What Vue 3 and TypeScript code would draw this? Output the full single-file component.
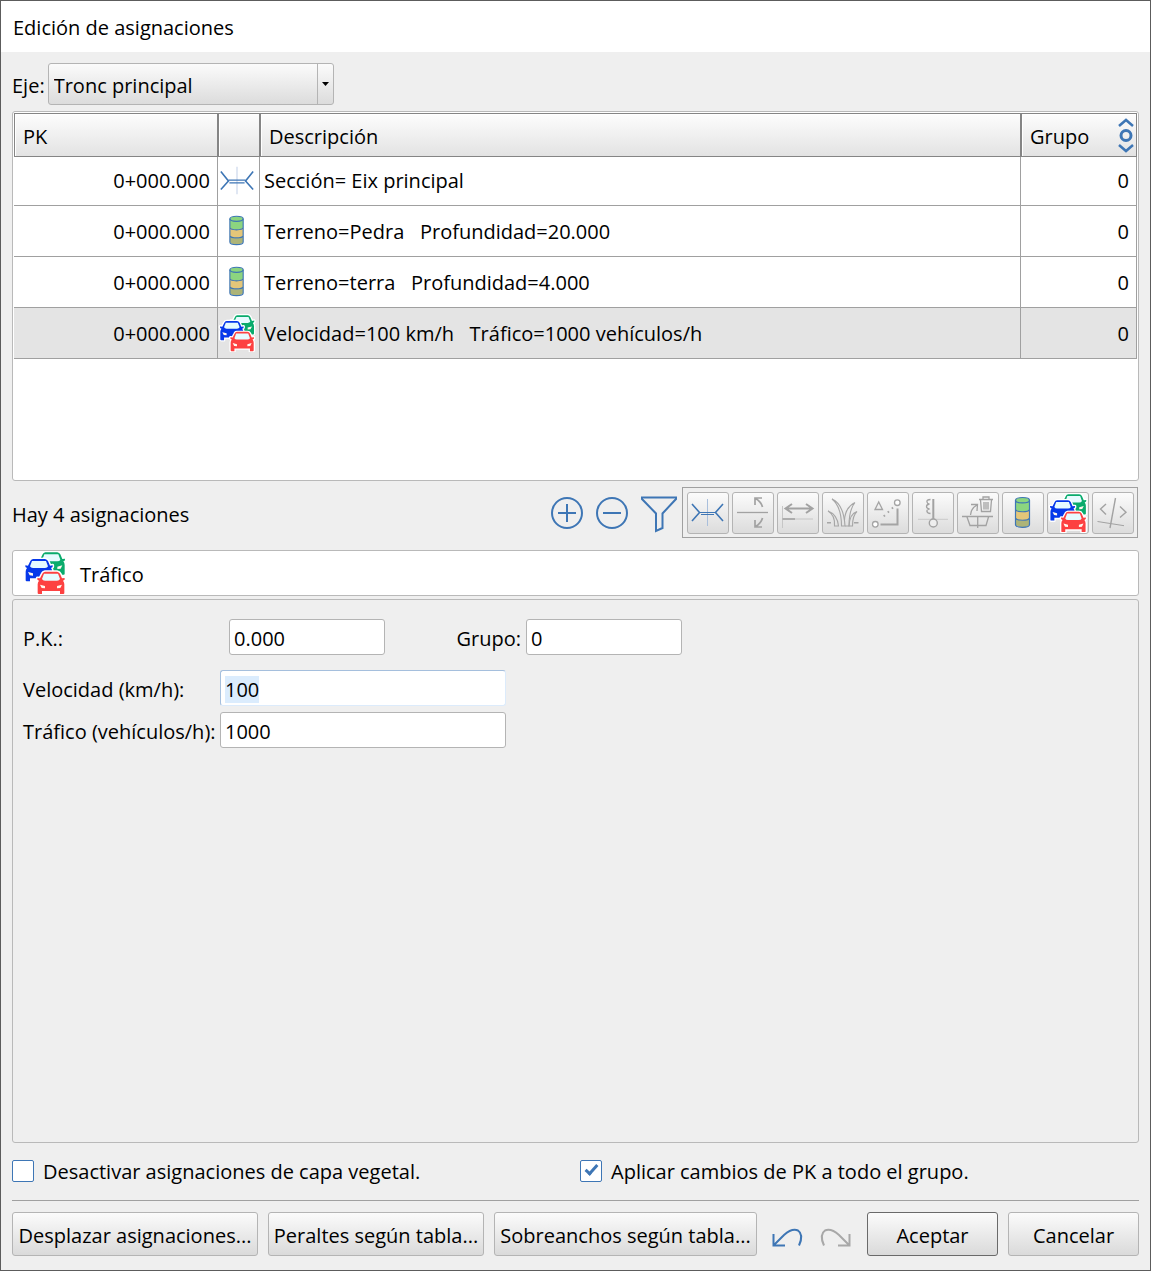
<script setup lang="ts">
import { onMounted, ref } from 'vue'

interface Assignment {
  pk: string
  icon: string
  description: string
  group: number
}

interface Tool {
  icon: string
  label: string
  enabled: boolean
}

const axis = ref('Tronc principal')
const selected = ref(3)

const assignments: Assignment[] = [
  { pk: '0+000.000', icon: 'section-row', description: 'Sección= Eix principal', group: 0 },
  { pk: '0+000.000', icon: 'soil', description: 'Terreno=Pedra   Profundidad=20.000', group: 0 },
  { pk: '0+000.000', icon: 'soil', description: 'Terreno=terra   Profundidad=4.000', group: 0 },
  { pk: '0+000.000', icon: 'cars', description: 'Velocidad=100 km/h   Tráfico=1000 vehículos/h', group: 0 },
]

const tools: Tool[] = [
  { icon: 'section', label: 'Sección', enabled: true },
  { icon: 'slope', label: 'Peralte', enabled: false },
  { icon: 'widening', label: 'Sobreancho', enabled: false },
  { icon: 'grass', label: 'Capa vegetal', enabled: false },
  { icon: 'shapes', label: 'Geometría', enabled: false },
  { icon: 'offset', label: 'Desplazamiento', enabled: false },
  { icon: 'removal', label: 'Eliminación', enabled: false },
  { icon: 'soil', label: 'Terreno', enabled: true },
  { icon: 'cars', label: 'Tráfico', enabled: true },
  { icon: 'code', label: 'Código', enabled: false },
]

const pk = ref('0.000')
const group = ref('0')
const speed = ref('100')
const traffic = ref('1000')
const disableTopsoil = ref(false)
const applyToGroup = ref(true)

const speedInput = ref<HTMLInputElement | null>(null)

onMounted(() => {
  speedInput.value?.focus()
  speedInput.value?.select()
})
</script>

<template>
  <svg class="defs" aria-hidden="true">
    <symbol id="section" viewBox="1 1 40 40">
      <path d="M20.5 7V34" stroke="#a9bfdc" fill="none" />
      <path d="M5 12L12.5 20.5L5 29M36 12L28.5 20.5L36 29" stroke="#3e76b5" stroke-width="1.6" fill="none" />
      <path d="M12.5 20.5H28.5M14 22.5H27" stroke="#3e76b5" stroke-width="1.2" fill="none" />
    </symbol>
    <symbol id="section-row" viewBox="1 1 40 40">
      <path d="M21 6V35" stroke="#dfe6f3" stroke-width="2" fill="none" />
      <path d="M4 11L12 21L4 30M38 11L30 21L38 30" stroke="#3e76b5" stroke-width="1.7" fill="none" />
      <path d="M12 20.2H30M13 23H29" stroke="#3e76b5" stroke-width="1.3" fill="none" />
    </symbol>
    <symbol id="slope" viewBox="1 1 40 40">
      <g stroke="#a2a2a2" fill="none">
        <path d="M5 20.5H36" stroke-width="1.3" />
        <path d="M23 13V6H30M23.5 6.5Q29 9.5 30.5 15M23 28V35H30M23.5 34.5Q29 31.5 30.5 26" stroke-width="1.7" />
      </g>
    </symbol>
    <symbol id="widening" viewBox="1 1 40 40">
      <g stroke="#a2a2a2" fill="none">
        <path d="M9 16.5H35M15 12L8.5 16.5L15 21M29 12L35.5 16.5L29 21" stroke-width="2" />
        <path d="M5.5 14V36M5.5 27H36" stroke="#c6c6c6" />
        <path d="M5.5 27H18" stroke-width="1.6" />
      </g>
    </symbol>
    <symbol id="grass" viewBox="1 1 40 40">
      <g stroke="#a6a6a6" fill="none" stroke-width="1.1">
        <path d="M10 7C17 10 22 18 23 34H19.5C19.5 22 16 12 10 7Z" />
        <path d="M33 10.5C26 14 23 20 22.5 28M33 10.5C28.5 16 27 24 27 34H23" />
        <path d="M6 19C12 21 16 27 16.500 34H12.5C13 28 11 22 6 19ZM35 19.5C30 21 27.5 26 27 34H30.5C30.5 28 31 23 35 19.5Z" />
        <path d="M5 30.7H9M32 30.7H36.5" stroke-width="1.4" />
      </g>
    </symbol>
    <symbol id="shapes" viewBox="1 1 40 40">
      <g stroke="#a4a4a4" fill="none" stroke-width="1.3">
        <path d="M11.7 10L8 17.5H15.500Z" />
        <circle cx="30.3" cy="10.7" r="2.8" fill="#fff" />
        <circle cx="8.3" cy="32.3" r="2.8" fill="#fff" />
        <path d="M30.5 16.5V32.5H13.5" stroke-width="2" />
        <path d="M26 15.5L14 27" stroke-width="2" stroke-dasharray="1.6 4" />
      </g>
    </symbol>
    <symbol id="offset" viewBox="1 1 40 40">
      <g stroke="#a2a2a2" fill="none">
        <path d="M6 27.3H36" stroke="#cacaca" />
        <path d="M21.3 7V27" stroke-width="2" />
        <circle cx="21.3" cy="31" r="4" stroke-width="1.4" fill="#eee" />
        <path d="M18.5 7.5Q14.5 7.5 15 10Q15.3 12 17.5 12Q14.5 12.5 14.5 14.5T17.5 17Q14.5 17.5 15 19.5Q15.5 21.5 18.5 21.5" stroke-width="1.3" />
      </g>
    </symbol>
    <symbol id="removal" viewBox="1 1 40 40">
      <g stroke="#a2a2a2" fill="none" stroke-width="1.3">
        <path d="M22 7.5H36M26 7V5H32V7M23.5 8L24.5 19.5H33.5L34.5 8M27 10V17.5M29 10V17.5M31 10V17.5" />
        <path d="M13.5 23Q14 16 20 13M14 12.5H20.5L20 19" />
        <path d="M5 24.5H36M10 25L13 33.5H29L31.5 25M20.7 25V36" />
      </g>
    </symbol>
    <symbol id="soil" viewBox="1 1 40 40">
      <path d="M13.5 8V18Q20.5 22 27.5 18V8Z" fill="#8cd57f" />
      <path d="M13.5 17.5Q20.5 22 27.5 17.5V27Q20.5 31 13.5 27Z" fill="#e4c679" />
      <path d="M13.5 26.5Q20.5 31 27.5 26.5V33Q20.5 38 13.5 33Z" fill="#adb478" />
      <ellipse cx="20.5" cy="8.2" rx="7" ry="2.7" fill="#8cd57f" />
      <g fill="none" stroke="#3e76b5" stroke-width="1.2">
        <ellipse cx="20.5" cy="8.2" rx="7" ry="2.7" />
        <path d="M13.5 8.2V32.5C13.5 36.2 27.5 36.2 27.5 32.5V8.2M13.5 17.5C14.5 20.5 26.5 20.5 27.5 17.5M13.5 26C14.5 29 26.5 29 27.5 26" />
      </g>
    </symbol>
    <symbol id="car" viewBox="-5 -5 94 78">
      <path
        d="M16 6Q18 1 24 0H60Q66 1 69 6L75 20L83 19Q85 25 78 27Q82 32 82 38V64Q82 67 79 67H69V58H15V67H5Q2 67 2 64V38Q2 32 6 27Q-1 25 1 19L9 20Z"
        fill="currentColor" stroke="#fff" stroke-width="9" stroke-linejoin="round" paint-order="stroke"
      />
      <path d="M21 6H63L69 22Q67 27 60 27H24Q17 27 15 22Z" fill="#e6fbff" />
      <path d="M9 39L24 43V50L14 49ZM75 39L60 43V50L70 49Z" fill="#fff8ee" />
    </symbol>
    <symbol id="cars" viewBox="-6 -4 132 132">
      <use href="#car" x="32" y="-5" width="94" height="78" color="#0aab6c" />
      <use href="#car" x="-5" y="15" width="94" height="78" color="#0638ea" />
      <use href="#car" x="31" y="53" width="94" height="78" color="#fd4141" />
    </symbol>
    <symbol id="code" viewBox="1 1 40 40">
      <g stroke="#a2a2a2" fill="none" stroke-width="1.4">
        <path d="M14 12L8.5 17L14 22.5M28 14.5L34 20.3L28 25.5M23.5 6L18 36" />
        <path d="M5.5 29.5L32 33.7" stroke-width="1" />
      </g>
    </symbol>
  </svg>

  <main class="dialog">
    <header class="title">Edición de asignaciones</header>

    <div class="content">
      <div class="axis">
        <label for="axis">Eje:</label>
        <div class="combo">
          <select id="axis" v-model="axis">
            <option>Tronc principal</option>
          </select>
          <span class="combo-arrow">
            <svg width="7" height="4" viewBox="0 0 7 4"><path d="M0 0H7L3.5 4Z" /></svg>
          </span>
        </div>
      </div>

      <div class="list">
        <table>
          <colgroup>
            <col class="col-pk" />
            <col class="col-icon" />
            <col />
            <col class="col-group" />
          </colgroup>
          <thead>
            <tr>
              <th scope="col">PK</th>
              <th scope="col" aria-label="Tipo"></th>
              <th scope="col">Descripción</th>
              <th scope="col" class="group-cell">
                <div class="group-head">
                  <span>Grupo</span>
                  <svg width="16" height="36" viewBox="0 0 16 36" fill="none" stroke="#3e76b5" stroke-width="2.5">
                    <path d="M1 9L8 3L15 9M1 28L8 34L15 28" />
                    <circle cx="8" cy="18.5" r="5" stroke-width="3" />
                  </svg>
                </div>
              </th>
            </tr>
          </thead>
          <tbody>
            <tr
              v-for="(row, i) in assignments"
              :key="i"
              :class="{ selected: i === selected }"
              @click="selected = i"
            >
              <td class="num">{{ row.pk }}</td>
              <td class="type"><svg><use :href="'#' + row.icon" /></svg></td>
              <td class="desc">{{ row.description }}</td>
              <td class="num">{{ row.group }}</td>
            </tr>
          </tbody>
        </table>
      </div>

      <div class="tools">
        <span class="count">Hay {{ assignments.length }} asignaciones</span>
        <div class="actions">
          <button type="button" class="plain" aria-label="Añadir">
            <svg viewBox="0 0 42 42"><circle cx="21" cy="21" r="15" /><path d="M12 21H30M21 12V30" /></svg>
          </button>
          <button type="button" class="plain" aria-label="Quitar">
            <svg viewBox="0 0 42 42"><circle cx="21" cy="21" r="15" /><path d="M12 21H30" /></svg>
          </button>
          <button type="button" class="plain" aria-label="Filtrar">
            <svg viewBox="0 0 42 42"><path d="M6 5.5H40V7L26.5 21.5V36L20 39V21.5L6 7Z" /></svg>
          </button>
        </div>
        <div class="toolbar">
          <button
            v-for="tool in tools"
            :key="tool.icon"
            type="button"
            class="tool"
            :aria-label="tool.label"
            :disabled="!tool.enabled"
          >
            <svg><use :href="'#' + tool.icon" /></svg>
          </button>
        </div>
      </div>

      <div class="kind">
        <svg><use href="#cars" /></svg>
        <span>Tráfico</span>
      </div>

      <section class="panel">
        <div class="position">
          <label for="pk">P.K.:</label>
          <input id="pk" v-model="pk" type="text" />
          <label for="group" class="group-label">Grupo:</label>
          <input id="group" v-model="group" type="text" />
        </div>
        <div class="fields">
          <label for="speed">Velocidad (km/h):</label>
          <input id="speed" ref="speedInput" v-model="speed" type="text" />
          <label for="traffic">Tráfico (vehículos/h):</label>
          <input id="traffic" v-model="traffic" type="text" />
        </div>
      </section>

      <div class="checks">
        <label>
          <input v-model="disableTopsoil" type="checkbox" />
          <span>Desactivar asignaciones de capa vegetal.</span>
        </label>
        <label>
          <input v-model="applyToGroup" type="checkbox" />
          <span>Aplicar cambios de PK a todo el grupo.</span>
        </label>
      </div>

      <hr />

      <footer class="footer">
        <button type="button" class="push shift">Desplazar asignaciones...</button>
        <button type="button" class="push cant">Peraltes según tabla...</button>
        <button type="button" class="push widen">Sobreanchos según tabla...</button>
        <div class="history">
          <button type="button" aria-label="Deshacer">
            <svg viewBox="0 0 48 44"><path d="M9.5 22V33.5H21M9.5 33.5L20 23Q28 16 34 18.5Q40 22.5 35 33.5" /></svg>
          </button>
          <button type="button" aria-label="Rehacer" disabled>
            <svg viewBox="0 0 48 44"><path d="M37.5 22V33.5H26M37.5 33.5L27 23Q19 16 13 18.5Q7 22.5 12 33.5" /></svg>
          </button>
        </div>
        <button type="submit" class="push main default">Aceptar</button>
        <button type="button" class="push main">Cancelar</button>
      </footer>
    </div>
  </main>
</template>

<style>
body {
  margin: 0;
  background: #efefef;
}
</style>

<style scoped>
.defs {
  position: absolute;
  width: 0;
  height: 0;
}

.dialog {
  box-sizing: border-box;
  min-height: 100vh;
  display: flex;
  flex-direction: column;
  border: 1px solid #5c5c5c;
  background: #efefef;
  color: #000;
  font: 20px/28px "Open Sans", "Noto Sans", sans-serif;
}

.dialog button,
.dialog input,
.dialog select {
  box-sizing: border-box;
  margin: 0;
  font: inherit;
  color: inherit;
}

.title {
  padding: 13px 12px 10px;
  background: #fff;
}

.content {
  flex: 1;
  display: flex;
  flex-direction: column;
  padding: 11px 11px 14px;
}

.axis {
  display: flex;
  align-items: center;
  gap: 3px;
}

.axis label {
  padding-top: 3px;
}

.combo {
  display: grid;
  width: 286px;
  height: 42px;
}

.combo > * {
  grid-area: 1 / 1;
}

.combo select {
  appearance: none;
  padding: 4px 22px 0 5px;
  border: 1px solid #b4b4b4;
  border-radius: 3px;
  background: linear-gradient(#fbfbfb, #dcdcdc);
  outline: none;
}

.combo-arrow {
  justify-self: end;
  display: grid;
  place-items: center;
  width: 15px;
  margin: 1px;
  border-left: 1px solid #b4b4b4;
  pointer-events: none;
}

.list {
  box-sizing: border-box;
  min-height: 370px;
  margin-top: 6px;
  padding: 1px;
  border: 1px solid #b9b9b9;
  border-radius: 3px;
  background: #fff;
}

table {
  width: 100%;
  table-layout: fixed;
  border-spacing: 0;
}

.col-pk {
  width: 204px;
}

.col-icon {
  width: 42px;
}

.col-group {
  width: 116px;
}

th {
  box-sizing: border-box;
  height: 44px;
  padding: 4px 8px 0;
  border: 1px solid #858585;
  background: linear-gradient(#fdfdfd, #e3e3e3);
  box-shadow: inset 1px 1px #fff;
  font-weight: 400;
  text-align: left;
}

.group-cell {
  padding: 0 2px 0 8px;
}

.group-head {
  display: flex;
  align-items: center;
  justify-content: space-between;
}

.group-head span {
  padding-top: 4px;
}

td {
  box-sizing: border-box;
  height: 51px;
  padding: 2px 4px 0;
  border: solid #a0a0a0;
  border-width: 0 1px 1px 0;
  white-space: pre;
}

tbody tr:first-child td {
  height: 49px;
  padding-top: 0;
}

.selected td {
  background: #e4e4e4;
}

td.num {
  padding-right: 7px;
  text-align: right;
}

td.type {
  padding: 0 3px 0 0;
}

.type svg {
  display: block;
  width: 38px;
  height: 38px;
}

.tools {
  display: flex;
  align-items: center;
  margin: 6px 1px 0 0;
}

.count {
  flex: 1;
  padding-top: 5px;
}

.actions {
  display: flex;
  gap: 3px;
  margin-right: 4px;
}

.plain,
.history button {
  padding: 0;
  border: 0;
  background: none;
}

.plain {
  width: 42px;
  height: 42px;
}

.plain svg,
.history svg {
  display: block;
  width: 100%;
  height: 100%;
  fill: none;
  stroke: #3e76b5;
  stroke-width: 2;
}

.toolbar {
  display: flex;
  gap: 3px;
  padding: 4px 3px 3px 4px;
  border: 1px solid #a0a0a0;
}

.tool {
  width: 42px;
  height: 42px;
  padding: 0;
  border: 1px solid #b4b4b4;
  border-radius: 3px;
  background: linear-gradient(#fbfbfb, #dcdcdc);
}

.tool svg {
  display: block;
  width: 40px;
  height: 40px;
}

.kind {
  display: flex;
  align-items: center;
  gap: 13px;
  height: 44px;
  margin-top: 12px;
  padding-left: 10px;
  border: 1px solid #b9b9b9;
  border-radius: 3px;
  background: #fff;
}

.kind svg {
  width: 44px;
  height: 44px;
}

.kind span {
  padding-top: 4px;
}

.panel {
  flex: 1;
  margin-top: 3px;
  padding: 19px 10px;
  border: 1px solid #b9b9b9;
  border-radius: 3px;
}

.position {
  display: grid;
  grid-template-columns: 206px 156px 141px 156px;
  align-items: center;
}

.group-label {
  justify-self: end;
  padding-right: 5px;
}

.fields {
  display: grid;
  grid-template-columns: 197px 286px;
  row-gap: 6px;
  align-items: center;
  margin-top: 15px;
}

.panel label {
  padding-top: 3px;
}

.panel input {
  width: 100%;
  height: 36px;
  padding: 2px 4px 0;
  border: 1px solid #b4b4b4;
  border-radius: 3px;
  background: #fff;
  outline: none;
}

.panel input:focus {
  border-color: #a5bfdd #dcebfb #dcebfb #a5bfdd;
}

.panel input::selection {
  background: #dbecfd;
  color: #000;
}

.checks {
  display: grid;
  grid-template-columns: 1fr 1fr;
  column-gap: 9px;
  margin-top: 12px;
}

.checks label {
  display: flex;
  align-items: center;
  gap: 9px;
}

.checks span {
  padding-top: 3px;
}

.checks input {
  appearance: none;
  display: grid;
  place-items: center;
  width: 22px;
  height: 22px;
  border: 1px solid #3e76b5;
  border-radius: 2px;
  background: #fff;
}

.checks input:checked::after {
  content: "";
  width: 4px;
  height: 10px;
  margin-bottom: 4px;
  border: solid #3e76b5;
  border-width: 0 3px 3px 0;
  transform: rotate(42deg);
}

hr {
  width: 100%;
  height: 1px;
  margin: 14px 0 11px;
  border: 0;
  background: #a0a0a0;
}

.footer {
  display: flex;
  gap: 10px;
}

.push {
  height: 44px;
  padding: 3px 0 0;
  border: 1px solid #b4b4b4;
  border-radius: 3px;
  background: linear-gradient(#fbfbfb, #dadada);
  white-space: nowrap;
}

.shift {
  width: 246px;
}

.cant {
  width: 216px;
}

.widen {
  width: 263px;
}

.main {
  width: 131px;
}

.default {
  border-color: #6a6a6a;
}

.history {
  flex: 1;
  display: flex;
  justify-content: center;
  margin: 0 -4px;
}

.history button {
  width: 48px;
  height: 44px;
}

.history button:disabled svg {
  stroke: #a8a8a8;
}
</style>
